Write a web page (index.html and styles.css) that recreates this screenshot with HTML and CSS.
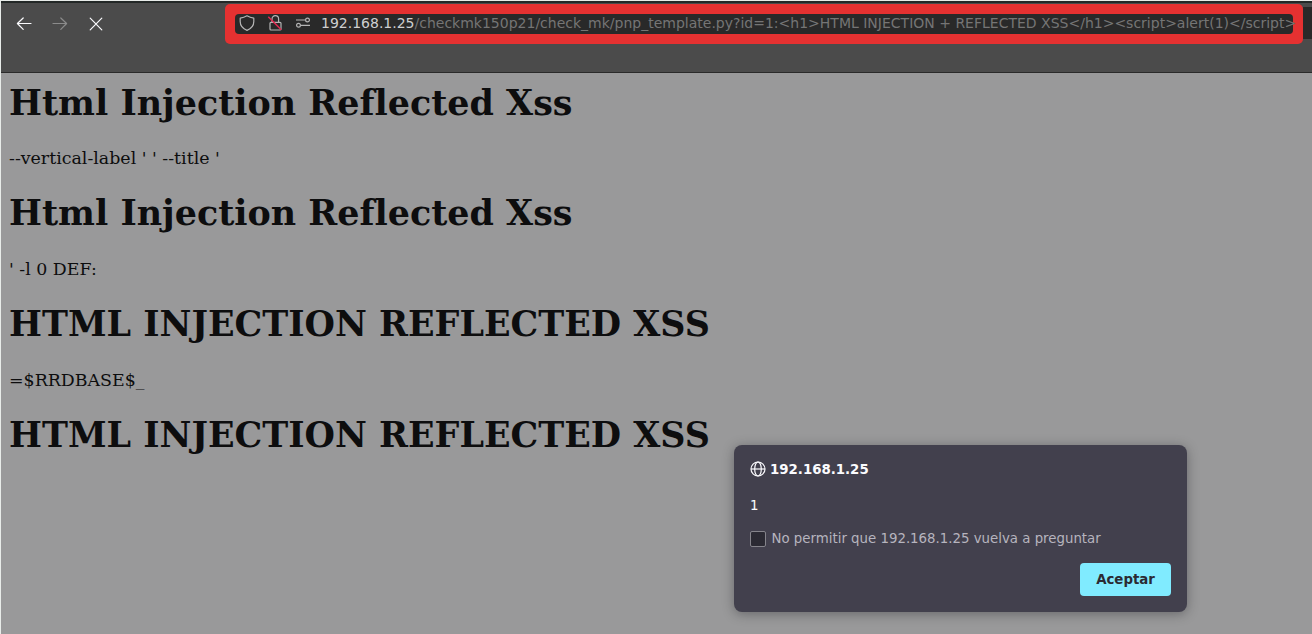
FILE: index.html
```html
<!DOCTYPE html>
<html lang="es">
<head>
<meta charset="utf-8">
<title>192.168.1.25</title>
<link rel="stylesheet" href="styles.css">
</head>
<body>
<div class="window">
  <header class="toolbar">
    <nav class="nav">
      <svg class="icon" viewBox="0 0 16 16"><path d="M15 7.500H1.500M7.200 2L1.400 7.500l5.800 5.800"/></svg>
      <svg class="icon disabled" viewBox="0 0 16 16"><path d="M1 7.500h13.500M8.800 2L14.600 7.500l-5.800 5.800"/></svg>
      <svg class="icon" viewBox="0 0 16 16"><path d="M2.200 2.200l11.600 11.600M13.800 2.200L2.200 13.800"/></svg>
    </nav>
    <div class="highlight">
      <div class="address">
        <svg class="badge" viewBox="0 0 16 16"><path d="M8 .8c2 1.200 4.200 2 6.800 2.400v3.300c0 4-2.700 7.200-6.800 8.900-4.100-1.700-6.800-4.900-6.800-8.900V3.200C3.800 2.800 6 2 8 .8z"/></svg>
        <svg class="badge" viewBox="0 0 16 16"><path d="M5 7V4a3.300 3.300 0 0 1 6.600 0V7M4 7.300h9a1 1 0 0 1 1 1V14a1 1 0 0 1-1 1H4a1 1 0 0 1-1-1V8.300a1 1 0 0 1 1-1z"/><path class="slash" d="M1.300 1.800l13 13"/></svg>
        <svg class="badge" viewBox="0 0 16 16"><path d="M1 5h9M6 10.300h9"/><circle cx="12.500" cy="5" r="1.900"/><circle cx="3.500" cy="10.300" r="1.900"/></svg>
        <span class="url"><span class="host">192.168.1.25</span>/checkmk150p21/check_mk/pnp_template.py?id=1:&lt;h1&gt;HTML INJECTION + REFLECTED XSS&lt;/h1&gt;&lt;script&gt;alert(1)&lt;/script&gt;</span>
      </div>
    </div>
    <div class="address-end"></div>
  </header>
  <main class="page">
    <h1>Html Injection Reflected Xss</h1>
    <p>--vertical-label ' ' --title '</p>
    <h1>Html Injection Reflected Xss</h1>
    <p>' -l 0 DEF:</p>
    <h1>HTML INJECTION REFLECTED XSS</h1>
    <p>=$RRDBASE$_</p>
    <h1>HTML INJECTION REFLECTED XSS</h1>
  </main>
</div>
<section class="dialog">
  <div class="dialog-title">
    <svg class="globe" viewBox="0 0 16 16"><circle cx="8" cy="8" r="7"/><ellipse cx="8" cy="8" rx="3.300" ry="7"/><path d="M1 8h14"/></svg>
    <span>192.168.1.25</span>
  </div>
  <div class="message">1</div>
  <label class="option"><span class="check"></span><span>No permitir que 192.168.1.25 vuelva a preguntar</span></label>
  <button class="accept">Aceptar</button>
</section>
</body>
</html>
```
FILE: styles.css
```css
* { box-sizing: border-box; }
body { margin: 0; width: 1312px; height: 634px; overflow: hidden; background: #e8ece9; }
.window { margin-left: 1px; padding-top: 1px; height: 634px; display: flex; flex-direction: column; }
.toolbar { display: flex; align-items: flex-start; flex: none; height: 72px; background: #4b4b4b; border-top: 2px solid #232827; border-bottom: 1px solid #2a2a2a; font-family: "DejaVu Sans", sans-serif; }
.nav { display: flex; gap: 20px; width: 224px; padding: 13px 0 0 15px; }
.icon { width: 16px; height: 16px; fill: none; stroke: #fbfbfe; stroke-width: 1.2; stroke-linecap: round; stroke-linejoin: round; }
.disabled { stroke: #8b8b8b; }
.highlight { flex: none; width: 1078px; height: 40px; padding: 10px; background: #e53131; border-radius: 5px; margin-top: 1px; }
.address { display: flex; align-items: center; gap: 12px; height: 20px; padding-left: 4px; border-radius: 4px; background: #292929; }
.badge { flex: none; width: 16px; height: 16px; margin-top: -2px; fill: none; stroke: #b5b5b5; stroke-width: 1.2; stroke-linejoin: round; }
.slash { stroke: #e22850; stroke-width: 1.5; }
.url { margin: -2px 0 0 -2px; white-space: pre; font-size: 14px; line-height: 20px; color: #757575; }
.host { color: #cfcfd0; }
.address-end { flex: 1; height: 32px; margin-top: 4px; background: #292929; }
.page { flex: 1; padding: 10px 8px 0; background: #99999a; color: #0d0d0e; font-family: "DejaVu Serif", serif; }
.page h1 { margin: 0 0 25px; font-size: 34.9px; line-height: 40px; white-space: nowrap; }
.page h1:first-child { margin-bottom: 24px; }
.page p { margin: 0 0 24px; font-size: 17.4px; line-height: 22px; white-space: nowrap; }
.dialog { position: absolute; left: 734px; top: 445px; width: 453px; height: 167px; padding: 16px; border-radius: 8px; background: #42404d; box-shadow: 0 2px 12px rgba(30, 30, 35, .4); color: #fbfbfe; font-family: "DejaVu Sans", sans-serif; font-size: 13.33px; display: flex; flex-direction: column; }
.dialog-title { display: flex; align-items: center; gap: 4px; height: 16px; font-weight: bold; }
.globe { width: 16px; height: 16px; fill: none; stroke: #fbfbfe; stroke-width: 1.2; }
.message { margin-top: 21px; line-height: 16px; }
.option { display: flex; align-items: center; gap: 5.500px; height: 16px; margin-top: 16px; color: #b6b4be; white-space: nowrap; }
.check { width: 16px; height: 16px; margin-top: 1px; background: #2b2a33; border: 1px solid #85848b; border-radius: 2px; }
.accept { align-self: flex-end; width: 91px; height: 33px; margin-top: 17px; padding: 0; border: 0; border-radius: 4px; background: #80ebff; color: #2b2a33; font: bold 13.33px "DejaVu Sans", sans-serif; }
```
